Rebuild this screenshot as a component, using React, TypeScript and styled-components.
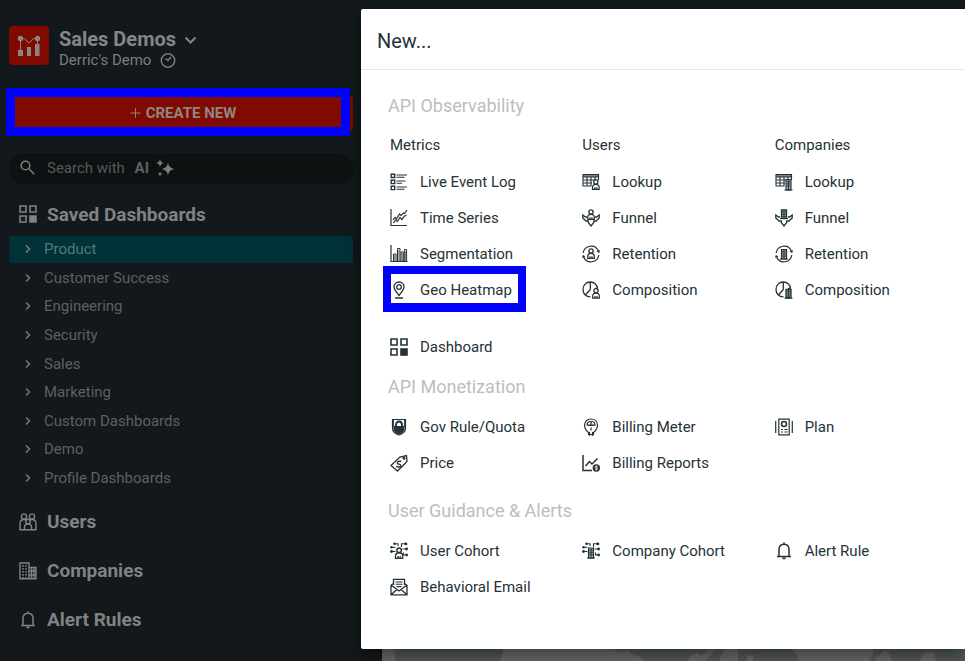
import React from "react";
import styled, { createGlobalStyle } from "styled-components";

const GlobalStyle = createGlobalStyle`
  * { box-sizing: border-box; }
  body { margin: 0; background: #12181b; font-family: Roboto, "Liberation Sans", sans-serif; overflow: hidden; }
  h1, h2, h3, p, ul { margin: 0; padding: 0; font-weight: inherit; }
  ul { list-style: none; }
  a { color: inherit; text-decoration: none; }
  button { font-family: inherit; border: 0; padding: 0; cursor: pointer; }
  svg { display: block; flex: none; }
`;

const ink = "#263238";

const Page = styled.div`
  position: relative;
  display: flex;
  height: 100vh;
  overflow: hidden;
  background: #12181b;
`;

const Sidebar = styled.aside`
  display: flex;
  flex-direction: column;
  flex: 0 0 382px;
  padding: 26px 29px 0 9px;
  color: #818282;
`;

const Account = styled.header`
  display: flex;
  gap: 10px;
  height: 45px;
`;

const Logo = styled.div`
  display: grid;
  place-items: center;
  width: 40px;
  height: 39px;
  border-radius: 4px;
  background: #800900;
`;

const AccountName = styled.button`
  display: flex;
  align-items: center;
  gap: 8px;
  background: none;
  color: #858686;
  font-size: 20px;
  font-weight: 700;
  line-height: 26px;
`;

const Project = styled.p`
  display: flex;
  align-items: center;
  gap: 9px;
  font-size: 15px;
  line-height: 16px;
  color: #7c7d7d;
`;

const CreateWrap = styled.div`
  position: relative;
  margin-top: 25px;
`;

const CreateButton = styled.button`
  display: flex;
  align-items: center;
  justify-content: center;
  gap: 5px;
  width: 100%;
  height: 35px;
  padding: 0 0 2px 4px;
  border-radius: 3px;
  background: #800900;
  color: #8d8583;
  font-size: 15px;
  font-weight: 700;
`;

const CreateHighlight = styled.div`
  position: absolute;
  inset: -8px 3px -5px -3px;
  border: 9px solid #0000ff;
  pointer-events: none;
`;

const Search = styled.label`
  position: relative;
  display: flex;
  align-items: center;
  height: 31px;
  margin-top: 22px;
  padding: 0 0 2px 11px;
  border-radius: 16px;
  background: #0d1112;
  color: #545a5c;
  font-size: 15px;
  cursor: text;
`;

const SearchText = styled.span`
  margin: 0 7px 0 12px;
  b { margin-left: 6px; font-weight: 700; color: #5c6264; }
`;

const SearchInput = styled.input`
  position: absolute;
  inset: 0;
  width: 100%;
  padding: 0 38px;
  border: 0;
  outline: 0;
  background: transparent;
  color: #818282;
  font: inherit;
`;

const NavLink = styled.a`
  display: flex;
  align-items: center;
  gap: 10px;
  height: 49px;
  padding-left: 10px;
  font-size: 19px;
  font-weight: 700;
`;

const SavedLink = styled(NavLink)`
  height: 42px;
  margin-top: 10px;
  padding-bottom: 2px;
`;

const DashList = styled.ul`
  display: flex;
  flex-direction: column;
  justify-content: space-between;
  height: 256px;
  margin-bottom: 5px;
`;

const DashLink = styled.a<{ $active?: boolean }>`
  display: flex;
  align-items: center;
  gap: 12px;
  height: 27px;
  padding: 0 0 1px 15px;
  border-radius: 3px;
  background: ${(p) => (p.$active ? "#003238" : "transparent")};
  color: ${(p) => (p.$active ? "#56777a" : "#5c6163")};
  font-size: 15px;
  svg { color: #747879; }
`;

const Main = styled.main`
  display: flex;
  flex-direction: column;
  flex: 1;
  min-width: 0;
  background: #6c6867;
`;

const TopBar = styled.div`
  height: 48px;
  background: #12181b;
`;

const MapPanel = styled.div`
  display: flex;
  align-items: flex-end;
  flex: 1;
  min-width: 0;
  margin-left: 13px;
  background: #515957;
  svg { width: 100%; }
`;

const Modal = styled.section`
  position: absolute;
  top: 9px;
  left: 361px;
  right: 0;
  padding-bottom: 44px;
  border-radius: 2px 0 0 2px;
  background: #fff;
  color: ${ink};
  box-shadow: 0 6px 16px rgba(0, 0, 0, 0.45);
`;

const ModalTitle = styled.h1`
  padding: 2px 16px 0;
  height: 61px;
  border-bottom: 1px solid #e4e6e7;
  font-size: 20px;
  line-height: 60px;
`;

const Group = styled.section<{ $top: number }>`
  margin: ${(p) => p.$top}px 0 0 27px;
`;

const GroupTitle = styled.h2<{ $gap: number }>`
  margin-bottom: ${(p) => p.$gap}px;
  color: #bdbdbd;
  font-size: 18px;
  line-height: 24px;
`;

const Columns = styled.div`
  display: grid;
  grid-template-columns: repeat(3, minmax(0, 1fr));
`;

const ColumnTitle = styled.h3`
  padding-left: 2px;
  height: 38px;
  font-size: 15px;
  line-height: 38px;
`;

const Option = styled.a`
  position: relative;
  display: flex;
  align-items: center;
  gap: 12px;
  height: 36px;
  padding-left: 2px;
  font-size: 15px;
  white-space: nowrap;
`;

const DashboardOption = styled(Option)`
  margin-top: 21px;
`;

const HeatmapHighlight = styled.span`
  position: absolute;
  top: -6px;
  left: -5px;
  width: 143px;
  height: 46px;
  border: 8px solid #0000ff;
  border-bottom-width: 9px;
  pointer-events: none;
`;

const Svg = ({ children, size = 18, w = 1.2 }: { children: React.ReactNode; size?: number; w?: number }) => (
  <svg width={size} height={size} viewBox="0 0 18 18" fill="none" stroke="currentColor" strokeWidth={w} aria-hidden="true">
    {children}
  </svg>
);

const Building = ({ x, y, w = 6, h = 9 }: { x: number; y: number; w?: number; h?: number }) => (
  <g transform={`translate(${x} ${y})`}>
    <path d={`M.5 ${h}V.5H${w - 0.5}V${h}z`} fill="#a3aaad" />
    <path d={`M-1 ${h}H${w + 1}M${w / 2} 1V${h}`} strokeWidth="1" />
    <path d={`M1 2.700H${w - 1}M1 4.900H${w - 1}M1 7.100H${w - 1}`} strokeWidth=".8" />
  </g>
);

const Person = ({ x, y, s = 1 }: { x: number; y: number; s?: number }) => (
  <g transform={`translate(${x} ${y}) scale(${s})`}>
    <path d="M0 9V7.100C0 5.300 1.200 4.400 3 4.400s3 .9 3 2.700V9zM2.100 9V7M3.900 9V7" fill="#fff" strokeWidth="1.100" />
    <circle cx="3" cy="2.300" r="1.900" fill="#fff" strokeWidth="1.200" />
  </g>
);

const DashboardIcon = () => (
  <Svg w={1.6}>
    <path d="M1 1h6v6H1zM11 1h6v6h-6zM1 11h6v6H1z" />
    <path d="M10.200 10.200h7.600v7.600h-7.600z" fill="currentColor" stroke="none" />
  </Svg>
);
const BellIcon = () => (
  <Svg w={1.5}>
    <path d="M2 14.500h14M4 14.300V7.500C4 4.200 6 2.200 9 2.200s5 2 5 5.300v6.800M9 .5v2" />
    <path d="M7 15.500h4c-.3 1.300-1 1.900-2 1.900s-1.700-.6-2-1.900z" fill="currentColor" stroke="none" />
  </Svg>
);
const EventLogIcon = () => (
  <Svg w={1.4}>
    <path d="M1.200 1.200h3.500v3.300H1.200zM1.200 7.300h3.500v3.300H1.200zM1.200 13.300h3.500v3.300H1.200z" />
    <path d="M6.500 2h10.500M6.500 4.200h8M6.500 8h9M6.500 10.200h5.500M6.500 14h10.500M6.500 16.200h8" strokeWidth="1.100" />
  </Svg>
);
const SeriesIcon = () => (
  <Svg>
    <path d="M1 0v16.500h16" />
    <path d="m3 11 2-2.500 1.500 1.500L9.500 5l1.500 1.500 2.500-2.500 1 .5L17 1M3.500 14l2-3 2 1.500L10 8.500l2 2 2-3 2.500-1.500" />
  </Svg>
);
const SegmentIcon = () => (
  <Svg w={1}>
    <path d="M1 0v16.500h16.500" strokeWidth="1.200" />
    <path d="M3.500 16V9H6v7M7.500 16V3.500H10V16M11 16V7h2.300v9M14.300 16V4.500h2.300V16" />
    <path d="M4.700 10v6M8.800 5v11M12.200 8v8M15.500 6v10" strokeOpacity=".6" />
  </Svg>
);
const PinIcon = () => (
  <Svg w={1.3}>
    <path d="M9 14.500C6.500 11 4 8.300 4 5.900 4 3 6.200 1 9 1s5 2 5 4.900c0 2.400-2.500 5.100-5 8.600zM5 17h8" />
    <circle cx="9" cy="6" r="2.300" />
  </Svg>
);
const Sheet = () => (
  <g>
    <path d="M1 1.500h15.500v2.500H1z" fill="#7b8386" />
    <path d="M1 4v9h8.500M1 7h14.500M1 10h9M5 4v9M9 4v9M13 4v4M16.500 2v5" />
  </g>
);
const Funnel = () => <path d="M5 8H3.500L.8 6v3L4 12h2.200v1.500L9 17l2.800-3.500V12H14l3.200-3V6l-2.700 2H13" />;
const Cycle = () => (
  <g>
    <path d="M1.200 8A7.900 7.900 0 0 1 16.300 6M16.800 10A7.900 7.900 0 0 1 1.700 12" />
    <path d="m14.600 6.300 2.600 2L18 5zM3.400 11.700.8 9.700 0 13z" fill="currentColor" stroke="none" />
  </g>
);
const Pie = () => <path d="M8.500 15.800C4 15.800 1 12.700 1 8.500S4 1 8.300 1c4 0 7.200 3 7.200 6.500M8.300 1v7.500M15.500 7.500H13M8.300 8.500 3.500 14" />;
const Network = () => (
  <g>
    <path d="M5 1.800h3V4M15.500 1.800h-4V5M1 9.500h4.500M1.500 5.200h4M17 7h-4.500M17 13h-3.500v-2.500" />
    <g fill="currentColor" stroke="none">
      <circle cx="4.500" cy="1.800" r="1.300" />
      <circle cx="15.800" cy="1.800" r="1.500" />
      <circle cx="1.500" cy="5.200" r="1.200" />
      <circle cx="1.500" cy="9.500" r="1.400" />
      <circle cx="16.600" cy="7" r="1.400" />
      <circle cx="16.600" cy="13" r="1.400" />
    </g>
  </g>
);

const icons: Record<string, React.ReactNode> = {
  log: <EventLogIcon />,
  series: <SeriesIcon />,
  segment: <SegmentIcon />,
  pin: <PinIcon />,
  userLookup: <Svg w={1.1}><Sheet /><Person x={10.500} y={6.500} s={1.1} /></Svg>,
  userFunnel: <Svg w={1.3}><Funnel /><Person x={5.700} y={0.500} s={1.1} /></Svg>,
  userCycle: <Svg w={1.2}><Cycle /><Person x={5.700} y={3.500} s={1.1} /></Svg>,
  userPie: <Svg w={1.3}><Pie /><Person x={10.700} y={7.200} s={1.1} /></Svg>,
  coLookup: <Svg w={1.1}><Sheet /><Building x={10.500} y={6} h={11} /></Svg>,
  coFunnel: <Svg w={1.3}><Funnel /><Building x={6} y={0.500} /></Svg>,
  coCycle: <Svg w={1.2}><Cycle /><Building x={6} y={4} h={10} /></Svg>,
  coPie: <Svg w={1.3}><Pie /><Building x={10.500} y={8} h={9} /></Svg>,
  rule: (
    <Svg>
      <path d="M2.500 1.500h13v9c0 3-2.500 5-6.500 6.500-4-1.500-6.500-3.500-6.500-6.500z" />
      <path d="M4 8.500h10V11c0 2-1.700 3.500-5 5-3.300-1.500-5-3-5-5z" fill="currentColor" />
      <path d="M6 8.500V7c0-2 1-3.500 3-3.500s3 1.500 3 3.500v1.500" strokeWidth="1.900" />
      <path d="M3 2v7M15 2v7" strokeWidth="1.800" />
    </Svg>
  ),
  price: (
    <Svg w={1.3}>
      <path d="m1 11.500 9-8.500 6.500-1.500.5 6L7.500 17z" />
      <circle cx="14" cy="4.300" r=".9" />
      <path d="M10.500 7.800C8.800 6.500 6.500 8 7.500 9.500c.8 1 2.700.3 3.200 1.700.5 1.500-1.900 2.500-3.200 1.100M10.800 6.500l-.3 1.500M6.600 13.500l.7-1.500" />
    </Svg>
  ),
  meter: (
    <Svg>
      <path d="M6.500 14.500C3.500 12 2.500 9.500 2.500 7.200 2.500 3.500 5.300 1 9 1s6.500 2.500 6.500 6.200c0 2.300-1 4.800-4 7.300v2h-5z" />
      <path d="M5 7C5 4.700 6.700 3.500 9 3.500S13 4.700 13 7zM9 4v3M5.500 7.500h7M9 9.500v3" />
      <path d="M7.500 14v4M10.500 14v4" />
    </Svg>
  ),
  reports: (
    <Svg w={1.5}>
      <path d="M1 1v15.500h9M3.500 12l4-4.500 2.500 2.500 5.500-5.500" />
      <circle cx="14.300" cy="14" r="3.700" fill="currentColor" stroke="none" />
      <path d="M15.700 12.700c-1-.7-2.700-.4-2.600.5.100 1 2.500.4 2.500 1.500 0 1-1.700 1.100-2.700.4M14.300 11.500v5" stroke="#fff" strokeWidth=".7" />
    </Svg>
  ),
  plan: (
    <Svg>
      <path d="M3.800 1.200h10.400v15.600H3.800z" />
      <path d="M.7 3v12M17.300 3v12" />
      <circle cx="9" cy="6" r="2.500" strokeWidth="1.500" />
      <path d="M6 11.500h2M9.500 11.500h3M6 14h2M9.500 14h3" />
    </Svg>
  ),
  userCohort: <Svg w={1.1}><Network /><Person x={5.500} y={5.500} s={1.2} /></Svg>,
  coCohort: <Svg w={1.1}><Network /><Building x={6} y={5.500} h={10.500} /></Svg>,
  email: (
    <Svg w={1.3}>
      <path d="M3.500 7V1.300h11V7M1 7v9.800h16V7M1 7l8 6 8-6M1 16.800l6-5.300M17 16.800l-6-5.300M1 7l2.500-1.500M17 7l-2.500-1.500" />
      <path d="M5.500 4h7M5.500 6.300h7M6.500 8.600h5" strokeWidth="1.100" />
    </Svg>
  ),
  bell: <BellIcon />,
};

const Chevron = () => (
  <svg width="8" height="10" viewBox="0 0 8 10" fill="none" stroke="currentColor" strokeWidth="1.600" aria-hidden="true">
    <path d="m2 1.500 3.500 3.500L2 8.500" />
  </svg>
);

const UsersIcon = () => (
  <Svg w={1.4}>
    <circle cx="5" cy="3.500" r="2.600" /><circle cx="13" cy="3.500" r="2.600" />
    <path d="M5.500 16.800H1v-6C1 8 2.500 6.500 5 6.500c1.300 0 2 .3 2.500.8M12.500 16.800H17v-6c0-2.800-1.500-4.300-4-4.300-1.300 0-2 .3-2.500.8" />
    <circle cx="9" cy="8.500" r="2.300" />
    <path d="M5.500 16.800V14c0-2 1.200-3 3.500-3s3.500 1 3.500 3v2.800z" />
  </Svg>
);
const CompaniesIcon = () => (
  <Svg w={1.4}>
    <path d="M1 1h9v15.800H1zM10 5.500h7v11.300h-7" />
    <path d="M4 3v13M7 3v13" strokeWidth="1.500" strokeDasharray="1.800 1.200" />
    <path d="M12.500 6v10.500M15 6v10.500M10 9h7M10 13h7" />
  </Svg>
);

type Item = { icon: string; label: string; marked?: boolean };
const observability: { title: string; items: Item[] }[] = [
  { title: "Metrics", items: [
    { icon: "log", label: "Live Event Log" }, { icon: "series", label: "Time Series" },
    { icon: "segment", label: "Segmentation" }, { icon: "pin", label: "Geo Heatmap", marked: true } ] },
  { title: "Users", items: [
    { icon: "userLookup", label: "Lookup" }, { icon: "userFunnel", label: "Funnel" },
    { icon: "userCycle", label: "Retention" }, { icon: "userPie", label: "Composition" } ] },
  { title: "Companies", items: [
    { icon: "coLookup", label: "Lookup" }, { icon: "coFunnel", label: "Funnel" },
    { icon: "coCycle", label: "Retention" }, { icon: "coPie", label: "Composition" } ] },
];
const monetization: Item[][] = [
  [{ icon: "rule", label: "Gov Rule/Quota" }, { icon: "price", label: "Price" }],
  [{ icon: "meter", label: "Billing Meter" }, { icon: "reports", label: "Billing Reports" }],
  [{ icon: "plan", label: "Plan" }],
];
const guidance: Item[][] = [
  [{ icon: "userCohort", label: "User Cohort" }, { icon: "email", label: "Behavioral Email" }],
  [{ icon: "coCohort", label: "Company Cohort" }],
  [{ icon: "bell", label: "Alert Rule" }],
];
const dashboards = ["Product", "Customer Success", "Engineering", "Security", "Sales", "Marketing", "Custom Dashboards", "Demo", "Profile Dashboards"];

const Options = ({ items }: { items: Item[] }) => (
  <>
    {items.map((item) => (
      <Option href="#" key={item.label}>
        {icons[item.icon]}
        {item.label}
        {item.marked && <HeatmapHighlight />}
      </Option>
    ))}
  </>
);

export default function App() {
  return (
    <Page>
      <GlobalStyle />
      <Sidebar>
        <Account>
          <Logo>
            <svg width="24" height="22" viewBox="0 0 24 22" fill="none" stroke="#8d8583" strokeWidth="1" aria-hidden="true">
              <path d="M3.500 4v13M3.500 3.500h4L12 8l4.500-4.500h4V9" />
              <path d="M1 15h5v6H1zM10 12h4v9h-4zM18 9h4.500v12H18z" fill="#8d8583" stroke="none" />
              <circle cx="3.500" cy="3.500" r="2.700" fill="#8d8583" stroke="none" />
              <circle cx="20.500" cy="3.500" r="2.700" fill="#8d8583" stroke="none" />
            </svg>
          </Logo>
          <div>
            <AccountName>
              Sales Demos
              <svg width="14" height="14" viewBox="0 0 14 14" fill="none" stroke="currentColor" strokeWidth="2" aria-hidden="true"><path d="m1.500 5.500 5 5 5-5" /></svg>
            </AccountName>
            <Project>
              Derric's Demo
              <svg width="16" height="16" viewBox="0 0 16 16" fill="none" stroke="currentColor" strokeWidth="1.500" aria-hidden="true"><circle cx="8" cy="8.500" r="6.700" /><path d="m5.500 6.500 2.500 2 3-3.500" /></svg>
            </Project>
          </div>
        </Account>
        <CreateWrap>
          <CreateButton>
            <svg width="11" height="11" viewBox="0 0 11 11" stroke="currentColor" aria-hidden="true"><path d="M5.500 1v10M.500 6h10" /></svg>
            CREATE NEW
          </CreateButton>
          <CreateHighlight />
        </CreateWrap>
        <Search>
          <svg width="15" height="15" viewBox="0 0 15 15" fill="none" stroke="#7c7d7d" strokeWidth="1.600" aria-hidden="true"><circle cx="5.500" cy="5.500" r="4.300" /><path d="m8.800 8.800 5.500 5.500" /></svg>
          <SearchText>Search with <b>AI</b></SearchText>
          <svg width="19" height="18" viewBox="0 0 19 18" fill="#7c7d7d" aria-hidden="true">
            <path d="M12 3.500q.7 5.800 6.500 6.500-5.800.7-6.500 6.500-.7-5.800-6.500-6.500 5.800-.7 6.500-6.500zM4 0q.4 3.500 4 4-3.600.5-4 4-.4-3.500-4-4 3.600-.5 4-4zM4 12.500q.2 2.300 2.500 2.500-2.300.2-2.500 2.500-.2-2.300-2.500-2.500 2.300-.2 2.500-2.500z" />
          </svg>
          <SearchInput type="text" aria-label="Search with AI" />
        </Search>
        <nav>
          <SavedLink href="#"><DashboardIcon />Saved Dashboards</SavedLink>
          <DashList>
            {dashboards.map((name, i) => (
              <li key={name}><DashLink href="#" $active={i === 0}><Chevron />{name}</DashLink></li>
            ))}
          </DashList>
          <NavLink href="#"><UsersIcon />Users</NavLink>
          <NavLink href="#"><CompaniesIcon />Companies</NavLink>
          <NavLink href="#"><BellIcon />Alert Rules</NavLink>
        </nav>
      </Sidebar>
      <Main>
        <TopBar />
        <MapPanel>
          <svg height="13" viewBox="0 0 570 13" preserveAspectRatio="none" fill="#6c6867" aria-hidden="true">
            <path d="M106 13V9l2-4V0h109l7 4 9-2 5 5 6 1 6 5zM293 13l2-5 8-3 3 3 8-7 7-1-6 8-5 5zM324 13l4-9 1-4h14v13zM352 13V8l6-1v6zM404 13l-3-8-6-5h83v6l-4 7zM480 10l5-3 3-4 5 1 4 9h-15zM525 13l4-8 10-1 2 9z" />
          </svg>
        </MapPanel>
      </Main>
      <Modal role="dialog" aria-labelledby="dialog-title">
        <ModalTitle id="dialog-title">New...</ModalTitle>
        <Group $top={24}>
          <GroupTitle $gap={8}>API Observability</GroupTitle>
          <Columns>
            {observability.map((col) => (
              <div key={col.title}>
                <ColumnTitle>{col.title}</ColumnTitle>
                <Options items={col.items} />
              </div>
            ))}
          </Columns>
          <DashboardOption href="#"><DashboardIcon />Dashboard</DashboardOption>
        </Group>
        <Group $top={10}>
          <GroupTitle $gap={10}>API Monetization</GroupTitle>
          <Columns>{monetization.map((items, i) => <div key={i}><Options items={items} /></div>)}</Columns>
        </Group>
        <Group $top={18}>
          <GroupTitle $gap={10}>User Guidance &amp; Alerts</GroupTitle>
          <Columns>{guidance.map((items, i) => <div key={i}><Options items={items} /></div>)}</Columns>
        </Group>
      </Modal>
    </Page>
  );
}
